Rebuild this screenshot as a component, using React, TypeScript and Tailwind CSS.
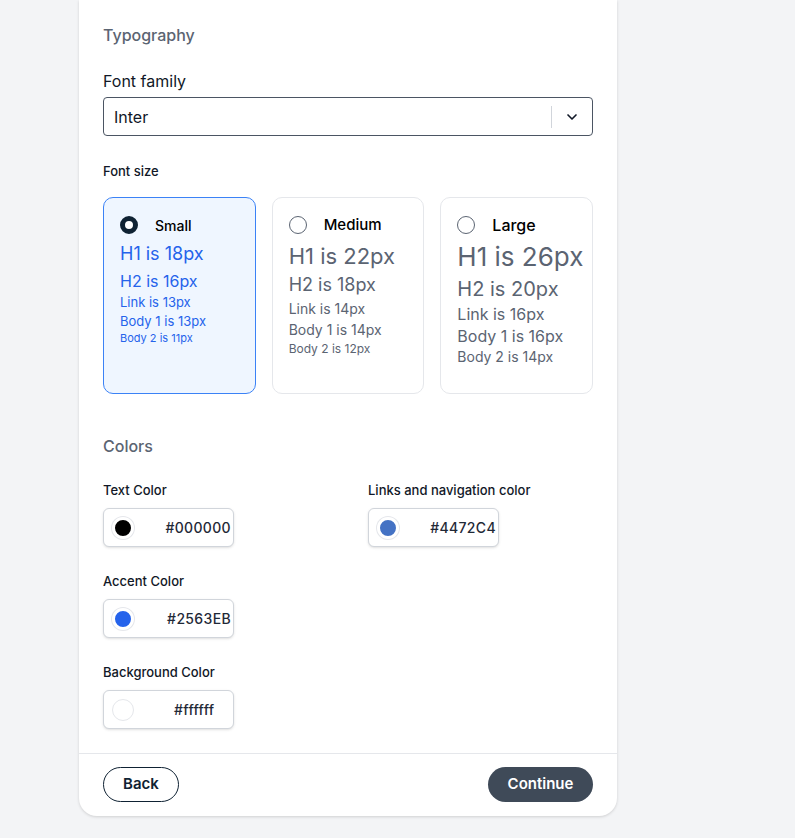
import { ChevronDown } from "lucide-react";

type SizeOpt = { label: string; selected: boolean; h1: string; h2: string; link: string; b1: string; b2: string; sizes: string[] };

const opts: SizeOpt[] = [
  { label: "Small", selected: true, h1: "H1 is 18px", h2: "H2 is 16px", link: "Link is 13px", b1: "Body 1 is 13px", b2: "Body 2 is 11px",
    sizes: ["text-[18px] mt-[6px]", "text-[16px] mt-[5px]", "text-[13px] mt-[3px]", "text-[13px] mt-[3px]", "text-[11px] mt-[3px]"] },
  { label: "Medium", selected: false, h1: "H1 is 22px", h2: "H2 is 18px", link: "Link is 14px", b1: "Body 1 is 14px", b2: "Body 2 is 12px",
    sizes: ["text-[22px] mt-[6px]", "text-[18px] mt-[3px]", "text-[14px] mt-[4px]", "text-[14px] mt-[3px]", "text-[12px] mt-[3px]"] },
  { label: "Large", selected: false, h1: "H1 is 26px", h2: "H2 is 20px", link: "Link is 16px", b1: "Body 1 is 16px", b2: "Body 2 is 14px",
    sizes: ["text-[26px] mt-[4px]", "text-[20px] mt-[3px]", "text-[16px] mt-[2px]", "text-[16px] mt-[2px]", "text-[14px] mt-[2px]"] },
];

function SizeCard({ o }: { o: SizeOpt }) {
  const color = o.selected ? "text-[#2563eb]" : "text-[#5b6472]";
  const lines = [o.h1, o.h2, o.link, o.b1, o.b2];
  return (
    <div className={o.selected ? "rounded-[10px] border border-[#3b82f6] bg-[#eff6ff] px-4 pt-[15px] h-[197px]" : "rounded-[10px] border border-[#e5e7eb] bg-white px-4 pt-[15px] h-[197px]"}>
      <div className="flex items-center gap-[17px] h-[24px]">
        {o.selected ? (
          <span className="w-[18px] h-[18px] rounded-full border-[5px] border-[#0f2233] bg-white" />
        ) : (
          <span className="w-[18px] h-[18px] rounded-full border border-[#5b6472] bg-white" />
        )}
        <span className={o.label === "Small" ? "text-[14px] font-medium text-black" : o.label === "Medium" ? "text-[15px] font-medium text-black" : "text-[16px] font-medium text-black"}>{o.label}</span>
      </div>
      {lines.map((l, i) => (
        <div key={i} className={`${o.sizes[i]} ${color} leading-tight whitespace-nowrap`}>{l}</div>
      ))}
    </div>
  );
}

function ColorField({ label, color, hex, ring }: { label: string; color: string; hex: string; ring?: boolean }) {
  return (
    <div>
      <div className="text-[13px] font-medium text-[#111827] h-[16px] leading-[16px]">{label}</div>
      <div className="mt-[10px] w-[131px] h-[39px] rounded-[6px] border border-[#d1d5db] shadow-sm bg-white flex items-center pl-[8px] pr-[2px]">
        <span className={ring ? "w-[22px] h-[22px] rounded-full border border-[#e5e7eb]" : "w-[22px] h-[22px] rounded-full border-[3px] border-white ring-1 ring-[#e5e7eb]"} style={{ backgroundColor: color }} />
        <span className={hex === "#ffffff" ? "ml-[40px] text-[14px] font-medium tracking-wide text-[#1f2937]" : "ml-auto text-[14px] font-medium tracking-wide text-[#1f2937]"}>{hex}</span>
      </div>
    </div>
  );
}

export default function App() {
  return (
    <div className="min-h-[838px] bg-[#f3f4f6] font-[Inter,sans-serif]">
      <div className="ml-[79px] w-[538px] bg-white rounded-b-[18px] shadow-[0_1px_3px_rgba(0,0,0,0.15)]">
        <div className="px-6 pt-[25px] pb-[24px]">
          <div className="text-[16px] leading-[20px] font-medium text-[#5b6472]">Typography</div>
          <div className="mt-[26px] text-[16px] leading-[20px] text-[#111827]">Font family</div>
          <div className="mt-[6px] h-[39px] rounded-[4px] border border-[#4b5563] flex items-center pl-[10px]">
            <span className="text-[16px] text-[#111827]">Inter</span>
            <span className="ml-auto h-[22px] w-px bg-[#d1d5db]" />
            <ChevronDown className="mx-[12px] w-4 h-4 text-[#111827]" strokeWidth={2.5} />
          </div>
          <div className="mt-[27px] text-[13px] leading-[16px] font-medium text-[#111827]">Font size</div>
          <div className="mt-[18px] grid grid-cols-3 gap-4">
            {opts.map((o) => <SizeCard key={o.label} o={o} />)}
          </div>
          <div className="mt-[42px] text-[16px] leading-[20px] font-medium text-[#5b6472]">Colors</div>
          <div className="mt-[26px] grid grid-cols-2 gap-x-[40px] gap-y-[26px]">
            <ColorField label="Text Color" color="#000000" hex="#000000" />
            <ColorField label="Links and navigation color" color="#4472C4" hex="#4472C4" />
            <ColorField label="Accent Color" color="#2563EB" hex="#2563EB" />
            <div />
            <ColorField label="Background Color" color="#ffffff" hex="#ffffff" ring />
          </div>
        </div>
        <div className="border-t border-[#e5e7eb] px-6 pt-[13px] pb-[14px] flex items-center justify-between">
          <button className="h-[35px] w-[76px] rounded-full border border-[#0f2233] text-[15px] font-semibold text-[#0f2233]">Back</button>
          <button className="h-[35px] w-[105px] rounded-full bg-[#3f4a58] text-[15px] font-semibold text-white">Continue</button>
        </div>
      </div>
    </div>
  );
}
